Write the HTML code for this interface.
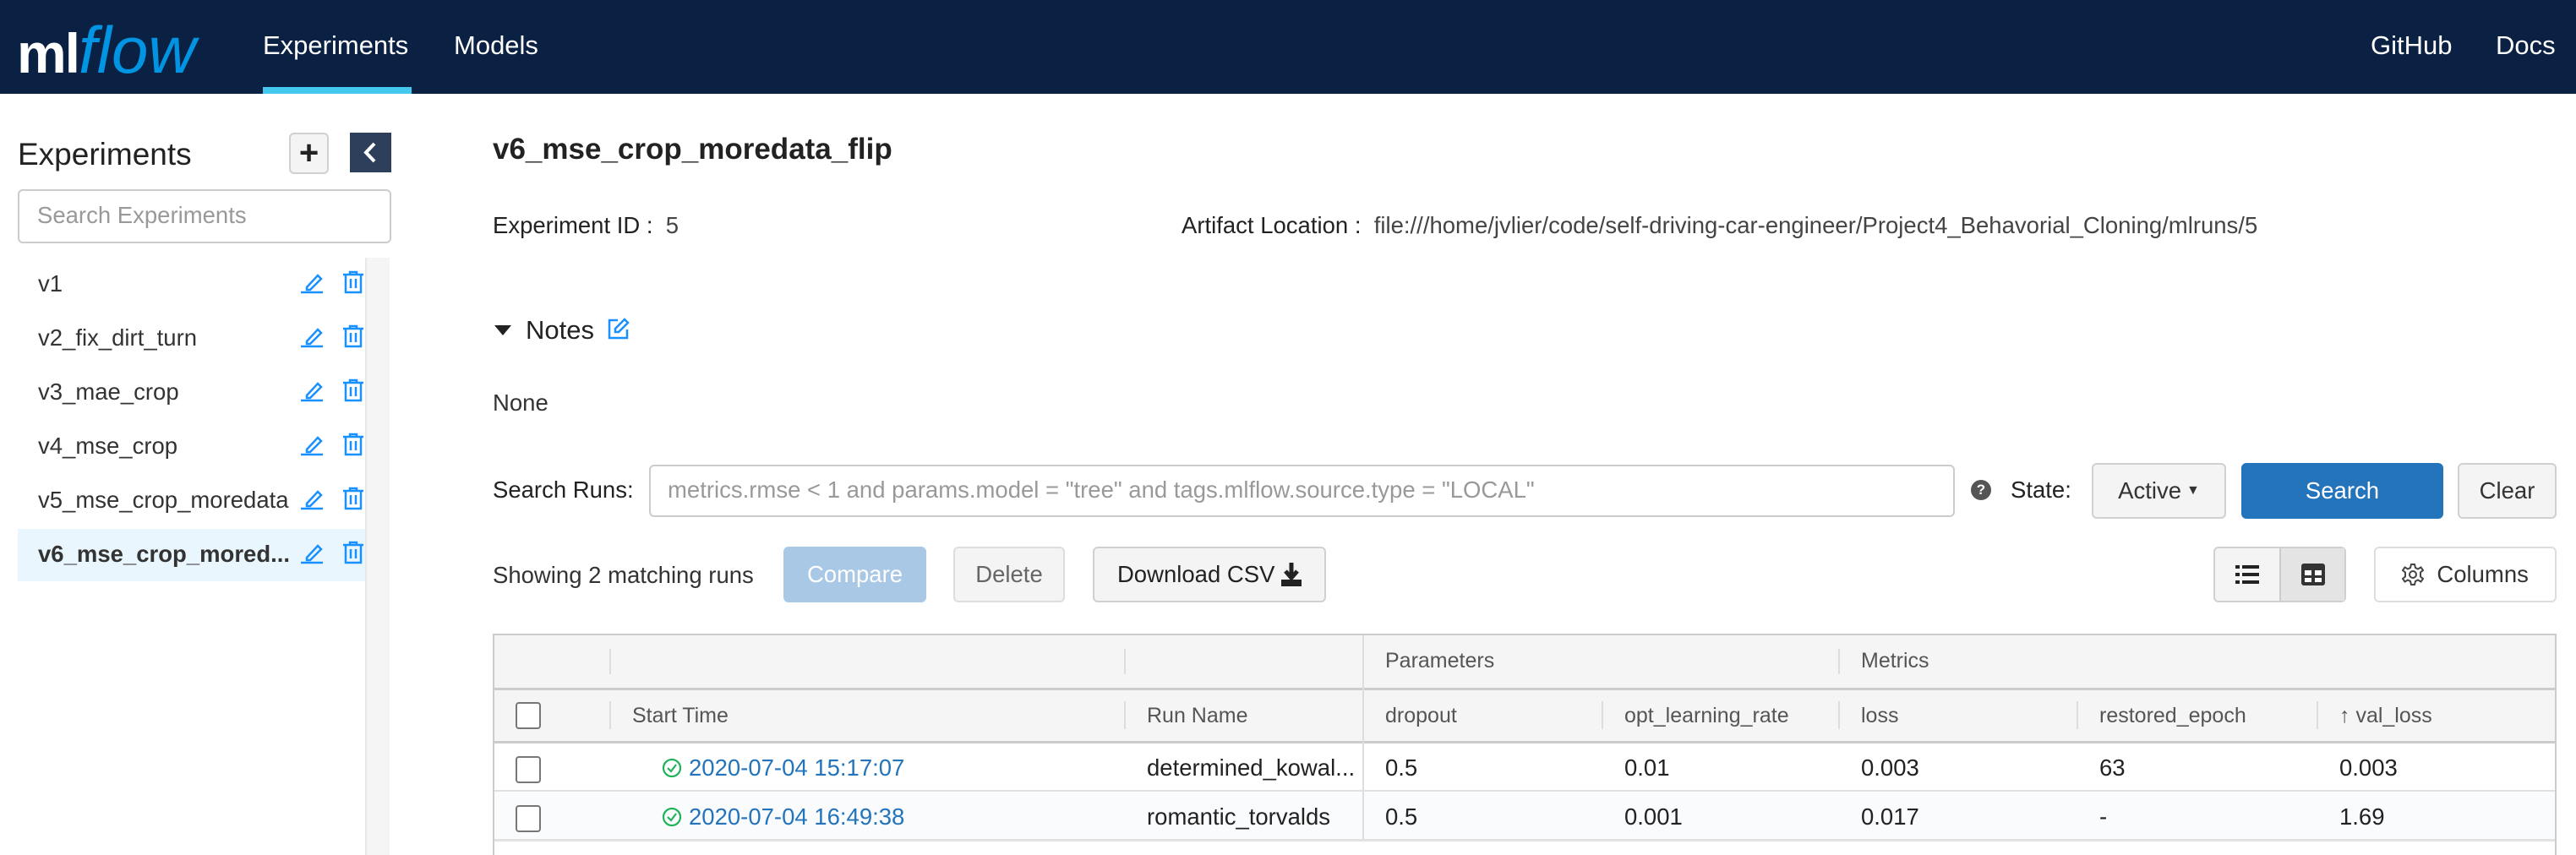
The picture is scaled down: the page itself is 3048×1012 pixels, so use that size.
<!DOCTYPE html>
<html><head><meta charset="utf-8"><style>
*{box-sizing:border-box;margin:0;padding:0}
body{width:3048px;height:1012px;overflow:hidden;background:#fff;font-family:"Liberation Sans",Arial,sans-serif;font-size:27.5px;color:#333;position:relative}
.a{position:absolute;white-space:nowrap}
.nav{position:absolute;left:0;top:0;width:3048px;height:111px;background:#0b2143}
.btn{position:absolute;border:2px solid #d0d0d0;border-radius:6px;background:#f4f4f4;display:flex;align-items:center;justify-content:center;color:#333}
.th{color:#555}
</style></head><body>
<div class="nav">
  <div class="a" style="left:20px;top:14px;font-size:66px;font-weight:bold;color:#fff;letter-spacing:-2px">ml<span style="color:#0194e2;font-style:italic;font-weight:normal;font-size:78px;letter-spacing:0">flow</span></div>
  <div class="a" style="left:311px;top:36px;color:#fff;font-size:31px">Experiments</div>
  <div class="a" style="left:311px;top:103px;width:176px;height:8px;background:#43c9ed"></div>
  <div class="a" style="left:537px;top:36px;color:#fff;font-size:31px">Models</div>
  <div class="a" style="left:2805px;top:36px;color:#fff;font-size:31px">GitHub</div>
  <div class="a" style="left:2953px;top:36px;color:#fff;font-size:31px">Docs</div>
</div>

<!-- sidebar -->
<div class="a" style="left:21px;top:162px;font-size:37px;color:#222">Experiments</div>
<div class="btn" style="left:342px;top:157px;width:47px;height:49px;font-size:40px;font-weight:bold;color:#222">+</div>
<div class="a" style="left:414px;top:157px;width:49px;height:47px;background:#2e3f5c"><svg width="49" height="47"><path d="M29 13 L19 23.5 L29 34" stroke="#fff" stroke-width="4" fill="none"/></svg></div>
<div class="a" style="left:21px;top:224px;width:442px;height:64px;border:2px solid #ccc;border-radius:6px"></div>
<div class="a" style="left:44px;top:239px;color:#999">Search Experiments</div>
<div class="a" style="left:432px;top:305px;width:29px;height:707px;background:#f5f5f5;border-left:2px solid #e8e8e8"></div>
<div class="a" style="left:21px;top:626px;width:411px;height:62px;background:#eaf6fd"></div>
<div id="list"></div>

<!-- main -->
<div class="a" style="left:583px;top:157px;font-size:35px;font-weight:bold;color:#222">v6_mse_crop_moredata_flip</div>
<div class="a" style="left:583px;top:251px;color:#222">Experiment ID :&nbsp; <span style="color:#444">5</span></div>
<div class="a" style="left:1398px;top:251px;color:#222">Artifact Location :&nbsp; <span style="color:#444">file:///home/jvlier/code/self-driving-car-engineer/Project4_Behavorial_Cloning/mlruns/5</span></div>
<svg class="a" style="left:585px;top:385px" width="20" height="14"><path d="M0 0H20L10 12Z" fill="#222"/></svg>
<div class="a" style="left:622px;top:373px;font-size:31px;color:#222">Notes</div>
<svg class="a" style="left:719px;top:376px" width="26" height="26" fill="none" stroke="#1890ff" stroke-width="2.5"><path d="M12 3H2V24H23V14"/><path d="M20 2L24 6 13 17H9V13Z"/></svg>
<div class="a" style="left:583px;top:461px;color:#333">None</div>

<div class="a" style="left:583px;top:564px;color:#222">Search Runs:</div>
<div class="a" style="left:768px;top:550px;width:1545px;height:62px;border:2px solid #ccc;border-radius:6px"></div>
<div class="a" style="left:790px;top:564px;color:#999">metrics.rmse &lt; 1 and params.model = "tree" and tags.mlflow.source.type = "LOCAL"</div>
<div class="a" style="left:2332px;top:568px;width:24px;height:24px;border-radius:50%;background:#555;color:#fff;font-size:17px;font-weight:bold;text-align:center;line-height:24px">?</div>
<div class="a" style="left:2379px;top:564px;color:#222">State:</div>
<div class="btn" style="left:2475px;top:548px;width:159px;height:66px">Active <span style="font-size:16px;margin-left:6px">▼</span></div>
<div class="btn" style="left:2652px;top:548px;width:239px;height:66px;background:#2374bb;border-color:#2374bb;color:#fff">Search</div>
<div class="btn" style="left:2908px;top:548px;width:117px;height:66px">Clear</div>

<div class="a" style="left:583px;top:665px;color:#333">Showing 2 matching runs</div>
<div class="btn" style="left:927px;top:647px;width:169px;height:66px;background:#a9c8e6;border-color:#a9c8e6;color:#fff">Compare</div>
<div class="btn" style="left:1128px;top:647px;width:132px;height:66px;color:#666;border-color:#ddd">Delete</div>
<div class="btn" style="left:1293px;top:647px;width:276px;height:66px;color:#222">Download CSV&nbsp;<svg width="24" height="28"><path d="M12 0V16M5 10L12 18L19 10" stroke="#222" stroke-width="5" fill="none"/><rect x="0" y="20" width="24" height="8" fill="#222"/></svg></div>
<div class="btn" style="left:2619px;top:647px;width:157px;height:66px;background:#f4f4f4;justify-content:flex-start;padding:0">
 <div style="width:77px;height:62px;display:flex;align-items:center;justify-content:center"><svg width="28" height="24" fill="#222"><rect x="0" y="1" width="5" height="4"/><rect x="8" y="1" width="20" height="4"/><rect x="0" y="10" width="5" height="4"/><rect x="8" y="10" width="20" height="4"/><rect x="0" y="19" width="5" height="4"/><rect x="8" y="19" width="20" height="4"/></svg></div>
 <div style="width:78px;height:62px;background:#e4e4e4;border-left:2px solid #ccc;display:flex;align-items:center;justify-content:center"><svg width="28" height="26"><rect x="0" y="0" width="28" height="26" rx="3" fill="#333"/><rect x="4" y="8" width="8" height="6" fill="#fff"/><rect x="16" y="8" width="8" height="6" fill="#fff"/><rect x="4" y="17" width="8" height="5" fill="#fff"/><rect x="16" y="17" width="8" height="5" fill="#fff"/></svg></div>
</div>
<div class="btn" style="left:2809px;top:647px;width:216px;height:66px;background:#fff;border-color:#ddd"><svg width="26" height="28" fill="none" stroke="#444" stroke-width="2"><circle cx="13" cy="14" r="4"/><path d="M11 2H15L16 6 19 7.5 22.5 5.5 25 9 22 11.5V16.5L25 19 22.5 22.5 19 20.5 16 22 15 26H11L10 22 7 20.5 3.5 22.5 1 19 4 16.5V11.5L1 9 3.5 5.5 7 7.5 10 6Z"/></svg>&nbsp; Columns</div>

<!-- table -->
<div class="a" style="left:583px;top:750px;width:2442px;height:262px;border:2px solid #ccc;border-bottom:none"></div>
<div class="a" style="left:585px;top:752px;width:2438px;height:127px;background:#f4f5f4"></div>
<div class="a" style="left:585px;top:814px;width:2438px;height:3px;background:#ccc"></div>
<div class="a" style="left:585px;top:877px;width:2438px;height:3px;background:#ccc"></div>
<div class="a" style="left:585px;top:937px;width:2438px;height:57px;background:#fafbfd"></div>
<div class="a" style="left:585px;top:935px;width:2438px;height:2px;background:#e2e2e2"></div>
<div class="a" style="left:585px;top:993px;width:2438px;height:3px;background:#e2e2e2"></div>
<div class="a" style="left:1612px;top:752px;width:2px;height:242px;background:#ddd"></div>
<div id="tbl"></div>
<script>
var L=document.getElementById('list'),h='';
['v1','v2_fix_dirt_turn','v3_mae_crop','v4_mse_crop','v5_mse_crop_moredata','v6_mse_crop_mored...'].forEach(function(t,i){
 var y=320+i*64;
 h+='<div class="a" style="left:45px;top:'+(y)+'px;color:#333;'+(i==5?'font-weight:bold;':'')+'">'+t+'</div>';
 h+='<svg class="a" style="left:355px;top:'+(y+2)+'px" width="28" height="26" fill="none" stroke="#1890ff" stroke-width="2.5"><path d="M8 18L21 4L25 8L12 21H8Z"/><path d="M1 24H27"/></svg>';
 h+='<svg class="a" style="left:405px;top:'+(y)+'px" width="26" height="28" fill="none" stroke="#1890ff" stroke-width="2.5"><path d="M1 5H25M9 5V2H17V5M4 5V26H22V5M10 10V21M16 10V21"/></svg>';
});
L.innerHTML=h;
var T=document.getElementById('tbl'),s='';
var cols=[583,721,1330,1612,1895,2175,2457,2741,3025];
[721,1330,2175].forEach(function(x){s+='<div class="a" style="left:'+x+'px;top:768px;width:2px;height:30px;background:#ddd"></div>'});
s+='<div class="a th" style="left:1639px;top:768px;font-size:25px">Parameters</div><div class="a th" style="left:2202px;top:768px;font-size:25px">Metrics</div>';
[721,1330,1895,2175,2457,2741].forEach(function(x){s+='<div class="a" style="left:'+x+'px;top:830px;width:2px;height:33px;background:#ddd"></div>'});
var hd=['Start Time','Run Name','dropout','opt_learning_rate','loss','restored_epoch','↑ val_loss'];
hd.forEach(function(t,i){s+='<div class="a th" style="left:'+(cols[i+1]+27)+'px;top:833px;font-size:25px">'+t+'</div>'});
var rows=[['2020-07-04 15:17:07','determined_kowal...','0.5','0.01','0.003','63','0.003'],['2020-07-04 16:49:38','romantic_torvalds','0.5','0.001','0.017','-','1.69']];
[[610,831],[610,895],[610,953]].forEach(function(p){s+='<div class="a" style="left:'+p[0]+'px;top:'+p[1]+'px;width:30px;height:32px;border:2px solid #777;border-radius:4px;background:#fff"></div>'});
rows.forEach(function(r,j){var y=893+j*58;
 s+='<svg class="a" style="left:783px;top:'+(y+4)+'px" width="24" height="24" fill="none" stroke="#1fb25a" stroke-width="2.2"><circle cx="12" cy="12" r="10"/><path d="M7 12L11 16L17 8"/></svg>';
 s+='<div class="a" style="left:815px;top:'+y+'px;color:#2374bb">'+r[0]+'</div>';
 for(var i=1;i<7;i++)s+='<div class="a" style="left:'+(cols[i+1]+27)+'px;top:'+y+'px;color:#222">'+r[i]+'</div>';
});
T.innerHTML=s;
</script>
</body></html>
